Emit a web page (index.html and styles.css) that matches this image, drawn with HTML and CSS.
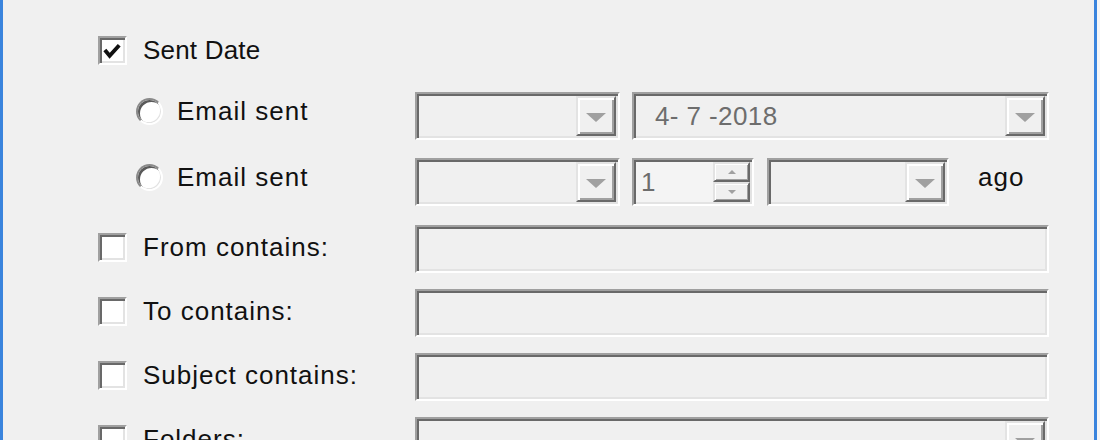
FILE: index.html
```html
<!DOCTYPE html>
<html lang="en">
<head>
    <meta charset="UTF-8">
    <title>Search Filter</title>
    <link rel="stylesheet" href="styles.css">
</head>
<body>
    <div class="frame">
        <div class="group">
            <div class="row">
                <div class="lead first">
                    <span class="check">
                        <svg width="25" height="25" viewBox="0 0 25 25"><polyline points="4,11 9,17 19,6" fill="none" stroke="#111" stroke-width="4"/></svg>
                    </span>
                    <span class="text plain">Sent Date</span>
                </div>
            </div>
            <div class="row">
                <div class="lead sub">
                    <span class="radio"></span>
                    <span class="text">Email sent</span>
                </div>
                <div class="ctrls">
                    <div class="combo short">
                        <div class="value"></div>
                        <div class="drop"><i class="arrow"></i></div>
                    </div>
                    <div class="combo grow">
                        <div class="value date">4- 7 -2018</div>
                        <div class="drop"><i class="arrow"></i></div>
                    </div>
                </div>
            </div>
            <div class="row">
                <div class="lead sub">
                    <span class="radio"></span>
                    <span class="text">Email sent</span>
                </div>
                <div class="ctrls">
                    <div class="combo short">
                        <div class="value"></div>
                        <div class="drop"><i class="arrow"></i></div>
                    </div>
                    <div class="combo spin">
                        <div class="value num">1</div>
                        <div class="spin-btns">
                            <div class="step"><i class="tiny up"></i></div>
                            <div class="step"><i class="tiny down"></i></div>
                        </div>
                    </div>
                    <div class="combo unit">
                        <div class="value"></div>
                        <div class="drop"><i class="arrow"></i></div>
                    </div>
                    <span class="text ago">ago</span>
                </div>
            </div>
        </div>

        <div class="group">
            <div class="row">
                <div class="lead">
                    <span class="check empty"></span>
                    <span class="text">From contains:</span>
                </div>
                <div class="ctrls">
                    <div class="combo grow"><div class="value"></div></div>
                </div>
            </div>
            <div class="row">
                <div class="lead">
                    <span class="check empty"></span>
                    <span class="text">To contains:</span>
                </div>
                <div class="ctrls">
                    <div class="combo grow"><div class="value"></div></div>
                </div>
            </div>
            <div class="row">
                <div class="lead">
                    <span class="check empty"></span>
                    <span class="text">Subject contains:</span>
                </div>
                <div class="ctrls">
                    <div class="combo grow"><div class="value"></div></div>
                </div>
            </div>
            <div class="row">
                <div class="lead">
                    <span class="check empty"></span>
                    <span class="text">Folders:</span>
                </div>
                <div class="ctrls">
                    <div class="combo grow">
                        <div class="value"></div>
                        <div class="drop"><i class="arrow"></i></div>
                    </div>
                </div>
            </div>
        </div>
    </div>
</body>
</html>
```

FILE: styles.css
```css
html, body {
    margin: 0;
    padding: 0;
    height: 440px;
    overflow: hidden;
    background-color: #f6f6f6;
}
body {
    font-family: "Liberation Sans", Arial, sans-serif;
    font-size: 26px;
    color: #111;
}
.frame {
    width: 1097px;
    height: 440px;
    box-sizing: border-box;
    border-left: 3px solid #3a84dd;
    border-right: 3px solid #3a84dd;
    background-color: #f0f0f0;
    padding: 26px 0 0 95px;
}
.group {
    display: flex;
    flex-direction: column;
    gap: 18px;
}
.group + .group {
    margin-top: 19px;
    gap: 16px;
}
.row {
    display: flex;
    height: 48px;
    align-items: center;
}
.lead {
    width: 317px;
    flex: none;
    display: flex;
    align-items: center;
    margin-top: -3px;
}
.lead.first {
    margin-top: 1px;
}
.lead.sub {
    padding-left: 38px;
    box-sizing: border-box;
    margin-top: -10px;
}
.text {
    letter-spacing: 1px;
    white-space: nowrap;
}
.text.plain {
    letter-spacing: 0.2px;
}
.check {
    width: 29px;
    height: 29px;
    box-sizing: border-box;
    flex: none;
    margin-right: 16px;
    background-color: #fff;
    border: 2px solid;
    border-color: #a0a0a0 #fff #fff #a0a0a0;
    box-shadow: inset 2px 2px 0 #696969, inset -2px -2px 0 #e3e3e3;
    display: flex;
    align-items: center;
    justify-content: center;
}
.check svg {
    display: block;
    margin: 2px 0 0 1px;
}
.radio {
    width: 27px;
    height: 27px;
    box-sizing: border-box;
    flex: none;
    margin-right: 14px;
    border-radius: 50%;
    background-color: #fff;
    border: 2px solid;
    border-color: #8a8a8a #fff #fff #8a8a8a;
    box-shadow: inset 2px 2px 0 #5a5a5a, inset -1px -1px 0 #e3e3e3;
}
.ctrls {
    width: 634px;
    display: flex;
    gap: 12px;
    align-items: center;
}
.combo {
    height: 48px;
    box-sizing: border-box;
    display: flex;
    padding: 2px;
    border: 2px solid;
    border-color: #a0a0a0 #fff #fff #a0a0a0;
    box-shadow: inset 2px 2px 0 #696969, inset -2px -2px 0 #e3e3e3;
    background-color: #f0f0f0;
}
.combo.short {
    width: 205px;
}
.combo.grow {
    flex: 1;
}
.combo.spin {
    width: 122px;
    background-color: #f4f4f4;
}
.combo.unit {
    width: 182px;
    margin-left: 1px;
}
.value {
    flex: 1;
    display: flex;
    align-items: center;
    color: #6d6d6d;
    letter-spacing: 0.4px;
}
.value.date {
    padding-left: 19px;
}
.value.num {
    padding-left: 5px;
}
.drop {
    width: 40px;
    box-sizing: border-box;
    flex: none;
    border: 2px solid;
    border-color: #e3e3e3 #696969 #696969 #e3e3e3;
    box-shadow: inset 2px 2px 0 #fff, inset -2px -2px 0 #a0a0a0;
    background-color: #f0f0f0;
    display: flex;
    align-items: center;
    justify-content: center;
}
.arrow {
    width: 0;
    height: 0;
    border-left: 10px solid transparent;
    border-right: 10px solid transparent;
    border-top: 9px solid #a0a0a0;
    margin-top: 2px;
}
.spin-btns {
    width: 37px;
    flex: none;
    display: flex;
    flex-direction: column;
}
.step {
    flex: 1;
    box-sizing: border-box;
    border: 2px solid;
    border-color: #e3e3e3 #696969 #696969 #e3e3e3;
    box-shadow: inset 1px 1px 0 #fff, inset -1px -1px 0 #a0a0a0;
    background-color: #f0f0f0;
    display: flex;
    align-items: center;
    justify-content: center;
}
.tiny {
    width: 0;
    height: 0;
    border-left: 4px solid transparent;
    border-right: 4px solid transparent;
}
.tiny.up {
    border-bottom: 4px solid #a0a0a0;
}
.tiny.down {
    border-top: 4px solid #a0a0a0;
}
.text.ago {
    margin-left: 17px;
    margin-top: -10px;
}
```
